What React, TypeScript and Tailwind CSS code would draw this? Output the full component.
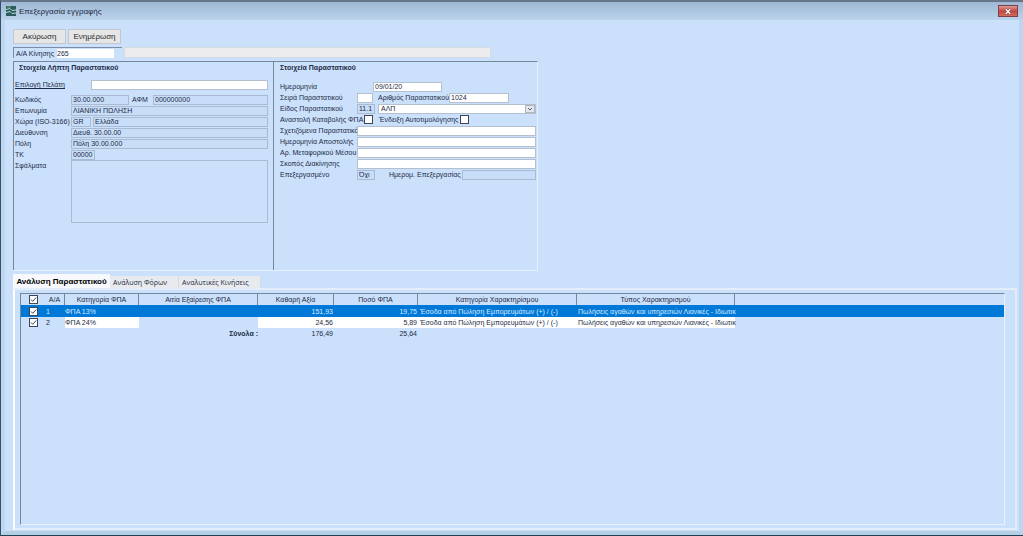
import React, { useState } from "react";

const fieldBase = "h-[10px] min-w-0 px-px text-[7px] leading-[8px] outline-none rounded-none";
const editable = `${fieldBase} bg-white border border-[#b4c0cf]`;
const locked = `${fieldBase} bg-[#c8ddf8] border border-[#a9bbd3]`;

type FieldProps = {
	id: string;
	label: string;
	value?: string;
	width: string;
	labelWidth?: string;
	readOnly?: boolean;
};

const Field = ({ id, label, value = "", width, labelWidth = "", readOnly = false }: FieldProps) => (
	<>
		<label htmlFor={id} className={`shrink-0 ${labelWidth}`}>
			{label}
		</label>
		<input id={id} defaultValue={value} readOnly={readOnly} className={`${readOnly ? locked : editable} ${width}`} />
	</>
);

const Row = ({ children }: { children: React.ReactNode }) => (
	<div className="flex h-[11px] items-center whitespace-nowrap">{children}</div>
);

const Tick = ({ id, label, checked = false }: { id: string; label: string; checked?: boolean }) => (
	<span className="relative inline-flex h-[9px] w-[9px] shrink-0 align-middle">
		<input
			id={id}
			type="checkbox"
			aria-label={label}
			defaultChecked={checked}
			className="peer h-[9px] w-[9px] appearance-none border border-[#3c4654] bg-white"
		/>
		<svg
			viewBox="0 0 9 9"
			className="pointer-events-none absolute inset-0 hidden h-[9px] w-[9px] peer-checked:block"
			fill="none"
			stroke="#3c4654"
		>
			<path d="M2 4.5 3.7 6.3 7.2 2.5" />
		</svg>
	</span>
);

const tabs = ["Ανάλυση Παραστατικού", "Ανάλυση Φόρων", "Αναλυτικές Κινήσεις"];
const headers = [
	"Α/Α",
	"Κατηγορία ΦΠΑ",
	"Αιτία Εξαίρεσης ΦΠΑ",
	"Καθαρή Αξία",
	"Ποσό ΦΠΑ",
	"Κατηγορία Χαρακτηρίσμου",
	"Τύπος Χαρακτηρισμού",
];
const lines = [
	{ no: "1", vat: "ΦΠΑ 13%", net: "151,93", tax: "19,75" },
	{ no: "2", vat: "ΦΠΑ 24%", net: "24,56", tax: "5,89" },
];

const App = () => {
	const [activeTab, setActiveTab] = useState(0);
	const [selected, setSelected] = useState(0);

	return (
		<div className="flex h-screen w-full flex-col overflow-hidden border-t-2 border-b border-l border-t-[#66758a] border-b-[#1d4358] border-l-[#34506a] bg-[#cbe0fb] font-['Liberation_Sans',Arial,sans-serif] text-[7px] leading-[11px] text-[#1c2b45]">
			{/* Title bar */}
			<header className="flex h-[18px] shrink-0 items-center justify-between bg-gradient-to-b from-[#9db8d3] to-[#bcd3ec] pr-[5px] pl-[5px]">
				<div className="flex items-center gap-[3px]">
					<svg viewBox="0 0 10 10" className="h-[10px] w-[10px]">
						<rect width="10" height="10" fill="#2b5b60" />
						<path d="M0 3.5 4 2.5 6 4.5 10 4M0 6.5 4 5.5 6 7.5 10 7" stroke="#b9dcc9" fill="none" />
						<path d="M1 1h4" stroke="#6aa47d" />
					</svg>
					<h1 className="text-[8px]">Επεξεργασία εγγραφής</h1>
				</div>
				<button
					aria-label="Κλείσιμο"
					className="flex h-[12px] w-[20px] items-center justify-center border border-[#7d3f48] bg-gradient-to-b from-[#dd9a98] via-[#c2473f] to-[#cf6a60]"
				>
					<svg viewBox="0 0 8 8" className="h-[7px] w-[8px]" fill="none">
						<path d="M1.5 1.5 6.5 6.5M6.5 1.5 1.5 6.5" stroke="#6b3b40" strokeWidth="2.8" />
						<path d="M1.5 1.5 6.5 6.5M6.5 1.5 1.5 6.5" stroke="#fff" strokeWidth="1.6" />
					</svg>
				</button>
			</header>

			<main className="flex min-h-0 flex-1 flex-col border-r-4 border-b-4 border-l-4 border-r-[#bcd5f2] border-b-[#b5d0e4] border-l-[#bfd8f0] pr-[2px] pb-px pl-2">
				<div className="mt-[9px] flex gap-[2px]">
					{["Ακύρωση", "Ενημέρωση"].map((text) => (
						<button
							key={text}
							className="h-[15px] w-[53px] border border-[#c3c8cf] bg-[#e6e6e6] text-[8px] leading-[11px] text-[#2a2a2a]"
						>
							{text}
						</button>
					))}
				</div>

				<div className="mt-[3px] flex h-[11px] gap-[2px]">
					<div className="flex w-[109px] items-center border-t border-l border-[#7b8ca6] pl-[2px]">
						<label htmlFor="entry" className="w-[41px]">
							Α/Α Κίνησης
						</label>
						<input id="entry" defaultValue="265" className="h-[9px] w-[57px] bg-white text-[7px] leading-[9px] outline-none" />
					</div>
					<div className="w-[367px] border border-[#d5dbe3] bg-[#ececee]" />
				</div>

				{/* Recipient and document details */}
				<div className="mt-[3px] flex h-[210px] w-[525px] shrink-0 border-t border-r border-b border-t-[#75869d] border-r-[#e6effb] border-b-[#e6effb]">
					<section className="w-[260px] shrink-0 border-l border-[#75869d] pr-[5px] pl-px">
						<h2 className="pl-1 text-[7px] font-bold">Στοιχεία Λήπτη Παραστατικού</h2>
						<div className="mt-[6px] mb-[4px] flex h-[11px] items-center">
							<label htmlFor="customer" className="w-[76px] underline">
								Επιλογή Πελάτη
							</label>
							<input id="customer" className={`${editable} flex-1`} />
						</div>
						<Row>
							<Field id="code" label="Κωδικός" value="30.00.000" labelWidth="w-[56px]" width="mr-[3px] w-[58px]" readOnly />
							<Field id="afm" label="ΑΦΜ" value="000000000" labelWidth="w-[21px]" width="flex-1" readOnly />
						</Row>
						<Row>
							<Field id="name" label="Επωνυμία" value="ΛΙΑΝΙΚΗ ΠΩΛΗΣΗ" labelWidth="w-[56px]" width="flex-1" readOnly />
						</Row>
						<Row>
							<Field id="country" label="Χώρα (ISO-3166)" value="GR" labelWidth="w-[56px]" width="mr-[2px] w-[20px]" readOnly />
							<input aria-label="Χώρα" readOnly value="Ελλάδα" className={`${locked} flex-1`} />
						</Row>
						<Row>
							<Field id="address" label="Διεύθυνση" value="Διευθ. 30.00.00" labelWidth="w-[56px]" width="flex-1" readOnly />
						</Row>
						<Row>
							<Field id="city" label="Πόλη" value="Πόλη 30.00.000" labelWidth="w-[56px]" width="flex-1" readOnly />
						</Row>
						<Row>
							<Field id="zip" label="ΤΚ" value="00000" labelWidth="w-[56px]" width="w-[24px]" readOnly />
						</Row>
						<div className="flex">
							<label htmlFor="errors" className="w-[56px]">
								Σφάλματα
							</label>
							<textarea id="errors" readOnly className="h-[63px] flex-1 resize-none border border-[#a9bbd3] outline-none" />
						</div>
					</section>

					<section className="min-w-0 flex-1 border-l border-[#75869d] pr-px pl-[6px]">
						<h2 className="text-[7px] font-bold">Στοιχεία Παραστατικού</h2>
						<div className="mt-2">
							<Row>
								<Field id="date" label="Ημερομηνία" value="09/01/20" labelWidth="w-[93px]" width="w-[69px]" />
							</Row>
							<Row>
								<Field id="series" label="Σειρά Παραστατικού" labelWidth="w-[77px]" width="mr-[5px] w-[16px]" />
								<Field id="number" label="Αριθμός Παραστατικού" value="1024" labelWidth="w-[71px]" width="w-[60px]" />
							</Row>
							<Row>
								<Field id="kind" label="Είδος Παραστατικού" value="11.1" labelWidth="w-[77px]" width="mr-[3px] w-[18px]" readOnly />
								<div className="relative flex-1">
									<select
										aria-label="Είδος Παραστατικού"
										className="block h-[10px] w-full appearance-none border border-[#b4c0cf] bg-white px-[2px] text-[7px] leading-[8px]"
									>
										<option>ΑΛΠ</option>
									</select>
									<span className="pointer-events-none absolute top-px right-px flex h-2 w-[10px] items-center justify-center border border-[#aeb6c0] bg-[#e3e6ea]">
										<svg viewBox="0 0 6 4" className="h-[4px] w-[6px]" fill="none" stroke="#596575">
											<path d="M1 1 3 3 5 1" />
										</svg>
									</span>
								</div>
							</Row>
							<Row>
								<label htmlFor="suspend" className="w-[84px]">
									Αναστολή Καταβολής ΦΠΑ
								</label>
								<Tick id="suspend" label="Αναστολή Καταβολής ΦΠΑ" />
								<label htmlFor="selfbill" className="ml-[6px] w-[81px]">
									Ένδειξη Αυτοτιμολόγησης
								</label>
								<Tick id="selfbill" label="Ένδειξη Αυτοτιμολόγησης" />
							</Row>
							<Row>
								<Field id="related" label="Σχετιζόμενα Παραστατικά" labelWidth="w-[77px]" width="flex-1" />
							</Row>
							<Row>
								<Field id="shipdate" label="Ημερομηνία Αποστολής" labelWidth="w-[77px]" width="flex-1" />
							</Row>
							<Row>
								<Field id="vehicle" label="Αρ. Μεταφορικού Μέσου" labelWidth="w-[77px]" width="flex-1" />
							</Row>
							<Row>
								<Field id="purpose" label="Σκοπός Διακίνησης" labelWidth="w-[77px]" width="flex-1" />
							</Row>
							<Row>
								<Field id="processed" label="Επεξεργασμένο" value="Όχι" labelWidth="w-[77px]" width="mr-[14px] w-[18px]" readOnly />
								<Field id="procdate" label="Ημερομ. Επεξεργασίας" labelWidth="w-[73px]" width="flex-1" readOnly />
							</Row>
						</div>
					</section>
				</div>

				{/* Tabs */}
				<nav className="mt-[3px] flex h-[14px] shrink-0 items-end">
					{tabs.map((tab, i) => (
						<button
							key={tab}
							onClick={() => setActiveTab(i)}
							className={
								activeTab === i
									? "h-[14px] w-[97px] bg-[#f7f9fc] text-[8px] font-bold whitespace-nowrap text-black"
									: "h-[12px] border-r border-[#d5dae2] bg-[#e8eaee] pr-[11px] pl-[3px] font-['Open_Sans','Noto_Sans',sans-serif] text-[7px] whitespace-nowrap"
							}
						>
							{tab}
						</button>
					))}
				</nav>

				{/* Analysis grid */}
				<div className="flex min-h-0 flex-1 border-2 border-[#e4eefa] border-l-white px-[5px] pt-[3px] pb-[3px]">
					<div className="mr-[5px] flex-1 overflow-hidden border-t border-r border-b border-l border-t-[#75869d] border-r-[#e8f1fc] border-b-[#e8f1fc] border-l-[#75869d]">
						<table className="w-full table-fixed border-separate border-spacing-0 whitespace-nowrap">
							<colgroup>
								<col className="w-[24px]" />
								<col className="w-[20px]" />
								<col className="w-[74px]" />
								<col className="w-[119px]" />
								<col className="w-[76px]" />
								<col className="w-[84px]" />
								<col className="w-[159px]" />
								<col className="w-[158px]" />
								<col />
							</colgroup>
							<thead>
								<tr className="h-[11px]">
									<th className="p-0 leading-[9px]">
										<Tick id="all" label="Επιλογή όλων" checked />
									</th>
									{headers.map((text) => (
										<th key={text} className="border-r border-[#75869d] p-0 font-normal">
											{text}
										</th>
									))}
									<th className="p-0" />
								</tr>
							</thead>
							<tbody>
								{lines.map((line, i) => {
									const on = selected === i;
									const cell = on ? "p-0" : "bg-white p-0";
									return (
										<tr
											key={line.no}
											onClick={() => setSelected(i)}
											className={on ? "h-[12px] bg-[#0078d7] text-[#d5ebff]" : "h-[11px]"}
										>
											<td className="p-0 text-center leading-[9px]">
												<Tick id={`line${line.no}`} label={`Γραμμή ${line.no}`} checked />
											</td>
											<td className="p-0 pl-px">{line.no}</td>
											<td className={cell}>{line.vat}</td>
											<td className="p-0" />
											<td className={`${cell} pr-px text-right`}>{line.net}</td>
											<td className={`${cell} pr-px text-right`}>{line.tax}</td>
											<td className={`${cell} pl-[2px]`}>Έσοδα από Πώληση Εμπορευμάτων (+) / (-)</td>
											<td className={`${cell} pl-px`}>Πωλήσεις αγαθών και υπηρεσιών Λιανικές - Ιδιωτικ</td>
											<td className="p-0" />
										</tr>
									);
								})}
							</tbody>
							<tfoot>
								<tr className="h-[11px]">
									<td colSpan={3} />
									<td className="p-0 text-right font-bold">Σύνολα :</td>
									<td className="p-0 pr-px text-right">176,49</td>
									<td className="p-0 pr-px text-right">25,64</td>
									<td colSpan={3} />
								</tr>
							</tfoot>
						</table>
					</div>
				</div>
			</main>
		</div>
	);
};

export default App;
